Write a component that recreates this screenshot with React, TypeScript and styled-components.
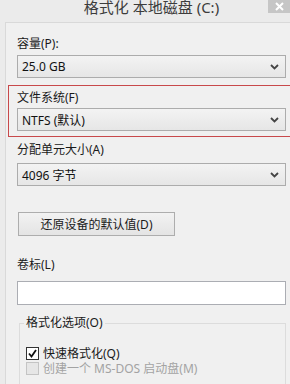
import React from 'react'
import styled, { createGlobalStyle } from 'styled-components'

const GlobalStyle = createGlobalStyle`
  html, body {
    margin: 0;
    padding: 0;
    background: #ebebeb;
  }
  * {
    box-sizing: border-box;
  }
`

const FONT = `"Segoe UI", "Noto Sans", "Noto Sans CJK SC", sans-serif`

const Window = styled.div`
  width: 290px;
  height: 384px;
  overflow: hidden;
  background: #ebebeb;
  font-family: ${FONT};
  display: flex;
  flex-direction: column;
`

const TitleBar = styled.div`
  height: 22px;
  display: flex;
  align-items: flex-start;
  flex-shrink: 0;
`

const Title = styled.div`
  flex: 1;
  padding-left: 35px;
  text-align: center;
  font-size: 15px;
  line-height: 15px;
  color: #3c3c3c;
  white-space: nowrap;
`

const CloseButton = styled.div`
  width: 22px;
  height: 13px;
  background: #c6c6c6;
  display: flex;
  align-items: center;
  justify-content: center;
`

const Body = styled.div`
  flex: 1;
  margin-left: 5px;
  border-left: 1px solid #d9d9d9;
  border-top: 1px solid #d9d9d9;
  background: #f0f0f0;
  padding: 13px 0 0 11px;
  display: flex;
  flex-direction: column;
  width: 300px;
`

const Label = styled.div<{ $top?: number }>`
  font-size: 12px;
  line-height: 16px;
  color: #1a1a1a;
  margin-top: ${(p) => p.$top ?? 0}px;
  white-space: nowrap;
`

const SelectBox = styled.div<{ $top?: number }>`
  width: 269px;
  height: 23px;
  margin-top: ${(p) => p.$top ?? 0}px;
  border: 1px solid #acacac;
  background: linear-gradient(#f3f3f3, #e6e6e6);
  display: flex;
  align-items: center;
  justify-content: space-between;
  padding: 0 6px 0 4px;
  font-size: 12px;
  color: #111;
  white-space: nowrap;
`

const Highlight = styled.div`
  margin: 7px 0 0 -9px;
  width: 300px;
  border: 1px solid #c8494b;
  padding: 4px 0 5px 8px;
  display: flex;
  flex-direction: column;
`

const Button = styled.div`
  width: 157px;
  height: 24px;
  margin: 26px 0 0 1px;
  border: 1px solid #adadad;
  background: linear-gradient(#f2f2f2, #e4e4e4);
  display: flex;
  align-items: center;
  justify-content: center;
  font-size: 12px;
  color: #1a1a1a;
  white-space: nowrap;
`

const TextInput = styled.div`
  width: 269px;
  height: 24px;
  margin-top: 8px;
  border: 1px solid #abadb3;
  background: #fff;
`

const Group = styled.fieldset`
  margin: 10px 0 0 2px;
  width: 267px;
  height: 80px;
  border: 1px solid #dcdcdc;
  padding: 15px 0 0 6px;
  min-width: 0;
`

const Legend = styled.legend`
  font-size: 12px;
  line-height: 16px;
  padding: 0 2px;
  margin-left: -2px;
  color: #1a1a1a;
`

const CheckRow = styled.div<{ $disabled?: boolean }>`
  display: flex;
  align-items: center;
  gap: 4px;
  height: 15px;
  line-height: 15px;
  font-size: 12px;
  color: ${(p) => (p.$disabled ? '#a3a3a3' : '#1a1a1a')};
  white-space: nowrap;
`

const Box = styled.div<{ $disabled?: boolean }>`
  width: 13px;
  height: 13px;
  border: 1px solid ${(p) => (p.$disabled ? '#c4c4c4' : '#333')};
  background: ${(p) => (p.$disabled ? '#e6e6e6' : '#fff')};
  display: flex;
  align-items: center;
  justify-content: center;
`

const Chevron = () => (
  <svg width="9" height="6" viewBox="0 0 9 6">
    <polyline points="1,1 4.5,4.5 8,1" fill="none" stroke="#444" strokeWidth="1.8" />
  </svg>
)

const Select = ({ value, top }: { value: string; top?: number }) => (
  <SelectBox $top={top}>
    <span>{value}</span>
    <Chevron />
  </SelectBox>
)

export default function App() {
  return (
    <>
      <GlobalStyle />
      <Window>
        <TitleBar>
          <Title>格式化 本地磁盘 (C:)</Title>
          <CloseButton>
            <svg width="9" height="9" viewBox="0 0 9 9">
              <path d="M1 1 L8 8 M8 1 L1 8" stroke="#fff" strokeWidth="2" />
            </svg>
          </CloseButton>
        </TitleBar>
        <Body>
          <Label>容量(P):</Label>
          <Select value="25.0 GB" top={3} />
          <Highlight>
            <Label>文件系统(F)</Label>
            <Select value="NTFS (默认)" top={2} />
          </Highlight>
          <Label $top={5}>分配单元大小(A)</Label>
          <Select value="4096 字节" top={5} />
          <Button>还原设备的默认值(D)</Button>
          <Label $top={21}>卷标(L)</Label>
          <TextInput />
          <Group>
            <Legend>格式化选项(O)</Legend>
            <CheckRow>
              <Box>
                <svg width="9" height="9" viewBox="0 0 9 9">
                  <polyline points="1,4.5 3.5,7.5 8,1" fill="none" stroke="#111" strokeWidth="1.8" />
                </svg>
              </Box>
              快速格式化(Q)
            </CheckRow>
            <CheckRow $disabled>
              <Box $disabled />
              创建一个 MS-DOS 启动盘(M)
            </CheckRow>
          </Group>
        </Body>
      </Window>
    </>
  )
}
